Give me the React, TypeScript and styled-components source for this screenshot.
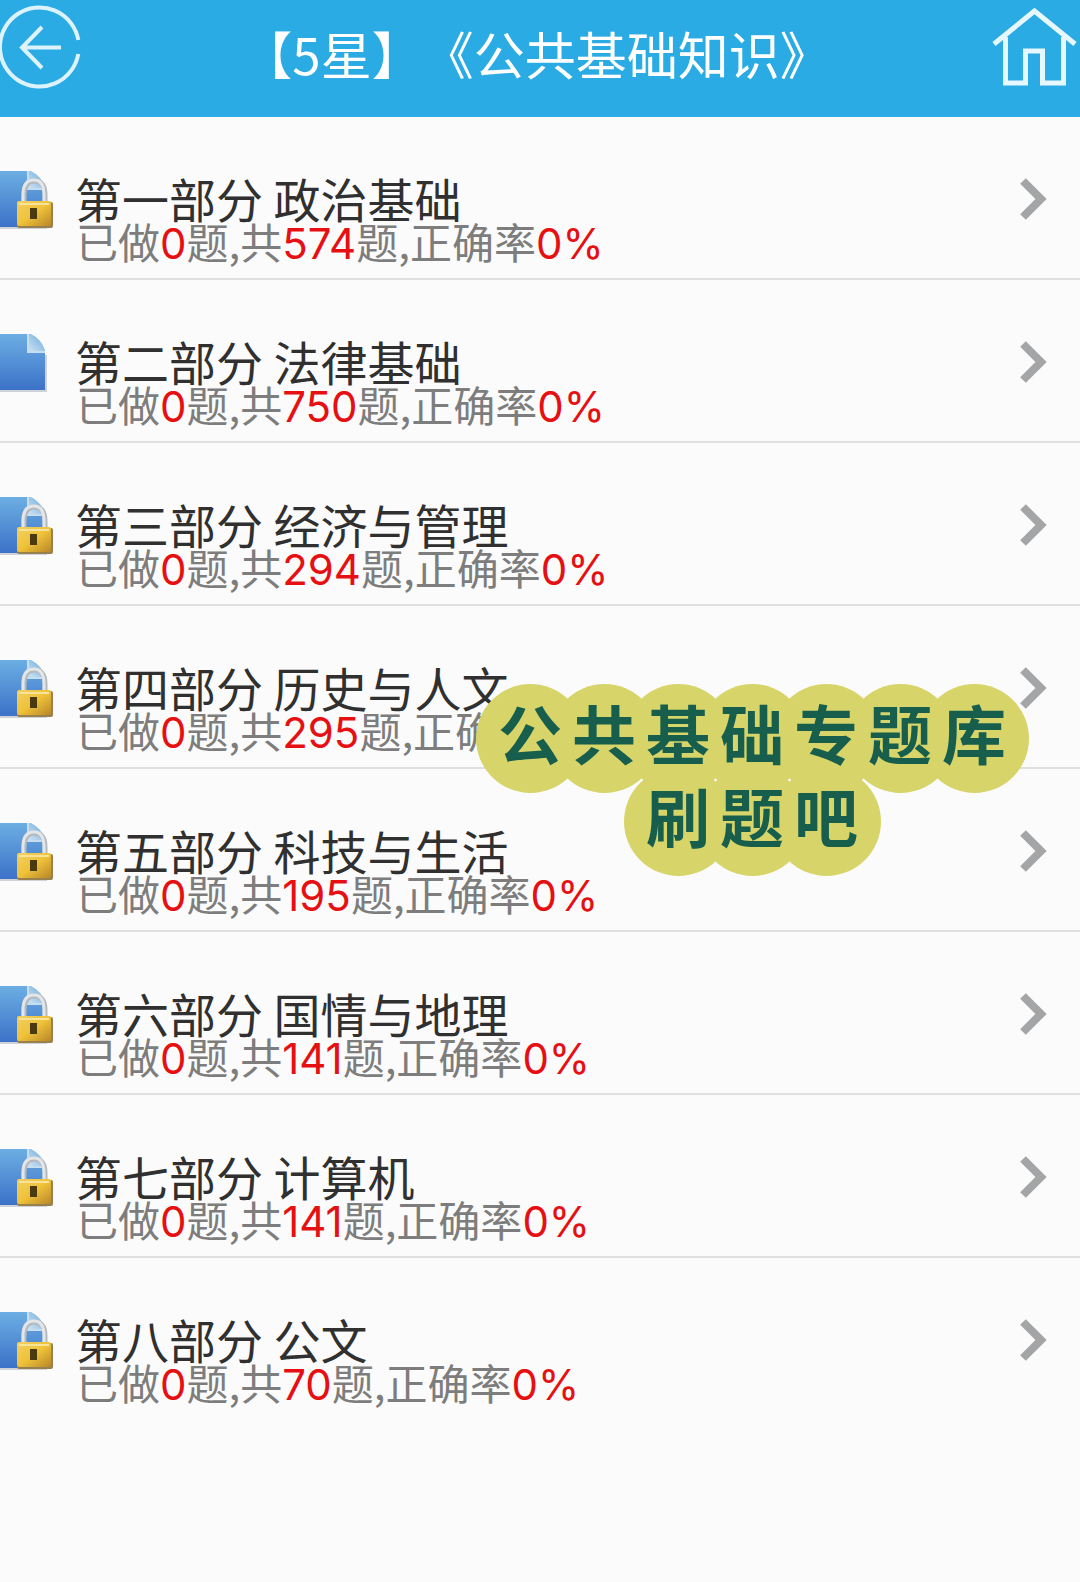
import React from "react";
import styled, { createGlobalStyle } from "styled-components";

const GlobalStyle = createGlobalStyle`
  * { box-sizing: border-box; }
  body {
    margin: 0;
    background: #fbfbfb;
    font-family: "Noto Sans CJK SC", "Noto Sans", sans-serif;
  }
`;

const Page = styled.div`
  position: relative;
  min-height: 100vh;
  overflow: hidden;
  background: #fbfbfb;
`;

const Header = styled.header`
  display: flex;
  align-items: flex-start;
  height: 117px;
  background: #2aabe4;
`;

const IconButton = styled.button<{ $width: number }>`
  flex: none;
  width: ${(p) => p.$width}px;
  padding: 1px 0 0;
  border: 0;
  background: none;
  cursor: pointer;
  svg { display: block; }
`;

const Heading = styled.h1`
  flex: 1;
  margin: 0;
  color: #fff;
  font-size: 51px;
  font-weight: 400;
  line-height: 106px;
  text-align: center;
  white-space: nowrap;
  text-spacing-trim: space-all;
`;

const List = styled.ul`
  margin: 0;
  padding: 0;
  list-style: none;
`;

const Item = styled.li`
  & + & { border-top: 2px solid #e0e0e0; }
`;

const RowLink = styled.a`
  display: flex;
  align-items: flex-start;
  height: 161px;
  padding-right: 32px;
  color: inherit;
  text-decoration: none;
  > svg { margin-top: 53px; }
`;

const Body = styled.div`
  flex: 1;
  padding: 56px 0 0 20px;
  white-space: nowrap;
`;

const Title = styled.h2`
  margin: 0;
  color: #303030;
  font-size: 47px;
  font-weight: 400;
  line-height: 50px;
`;

const Stats = styled.p`
  margin: 0;
  padding-left: 1px;
  color: #7d7d7d;
  font-size: 42px;
  line-height: 34px;
`;

const Num = styled.span`
  color: #e60f12;
  font-family: Inter, "Noto Sans", sans-serif;
  line-height: 1;
`;

const Sticker = styled.aside`
  position: absolute;
  top: 684px;
  right: 52px;
  display: flex;
  flex-direction: column;
  align-items: center;
  padding: 0 17px;
`;

const StickerLine = styled.div`
  display: flex;
  height: 83px;
`;

const Bubble = styled.span`
  display: grid;
  place-content: center;
  place-items: center;
  width: 74px;
  height: 109px;
  color: #175f4c;
  font-size: 64px;
  font-weight: 700;
  line-height: 90px;
  &::before {
    content: "";
    grid-area: 1 / 1;
    width: 109px;
    height: 109px;
    border-radius: 50%;
    background: #d7d46a;
  }
`;

const Glyph = styled.span`
  position: relative;
  z-index: 1;
  grid-area: 1 / 1;
  padding-bottom: 16px;
`;

const BackIcon = () => (
  <svg width="82" height="94" viewBox="0 0 82 94" fill="none" stroke="#dcf3fd" strokeWidth="4">
    <path d="M78.300 39A39.500 39.500 0 1 0 78.300 53" />
    <path d="M61 46.500H22M42 26L22 46.500L42 67" />
  </svg>
);

const HomeIcon = () => (
  <svg width="90" height="94" viewBox="0 0 90 94" fill="none" stroke="#e6f7fe" strokeWidth="5">
    <path d="M4 43L44.500 10L85 43" />
    <path d="M15.500 36V82H35.500V50H52.500V82H73.500V36" />
  </svg>
);

const FileIcon = ({ locked }: { locked: boolean }) => (
  <svg width="55" height="62" viewBox="0 0 55 62">
    <defs>
      <linearGradient id="paper" x1="0" y1="0" x2="0" y2="1">
        <stop offset="0" stopColor="#6caee3" />
        <stop offset="1" stopColor="#3c72c8" />
      </linearGradient>
      <linearGradient id="fold" x1="0" y1="1" x2="1" y2="0">
        <stop offset="0" stopColor="#d6e8f6" />
        <stop offset="1" stopColor="#69a9dc" />
      </linearGradient>
      <linearGradient id="brass" x1="0" y1="0" x2="1" y2="1">
        <stop offset="0" stopColor="#f2cf62" />
        <stop offset="0.500" stopColor="#efc238" />
        <stop offset="1" stopColor="#b9872a" />
      </linearGradient>
    </defs>
    <path d="M0 58H46V22" fill="none" stroke="#cfd3d8" strokeWidth="2" />
    <path d="M0 1H27L45 20V57H0Z" fill="url(#paper)" />
    <path d="M27 1H31Q41 6 45 17V20H27Z" fill="url(#fold)" />
    <path d="M28 1V19H45" fill="none" stroke="#c7def1" strokeWidth="2" />
    {locked && (
      <g>
        <path d="M24 34V25Q24 11 34 11Q45 11 45 25V34" fill="none" stroke="#b4b9be" strokeWidth="5" />
        <path d="M23 34V25Q23 10 34 10Q44 10 44 25V34" fill="none" stroke="#e3e6e9" strokeWidth="3" />
        <rect x="17" y="32" width="36" height="26" rx="2" fill="#98814f" />
        <rect x="17" y="31" width="34" height="25" rx="2" fill="url(#brass)" />
        <path d="M19 34H49" stroke="#f8e39a" strokeWidth="2" />
        <path d="M30 38H37V49H30Z" fill="#4a3a12" />
      </g>
    )}
  </svg>
);

const Chevron = () => (
  <svg width="28" height="58" viewBox="0 0 28 58" fill="none" stroke="#a3a5a6" strokeWidth="8">
    <path d="M3 11L21 29L3 47" />
  </svg>
);

const parts = [
  { title: "第一部分 政治基础", total: 574, locked: true },
  { title: "第二部分 法律基础", total: 750, locked: false },
  { title: "第三部分 经济与管理", total: 294, locked: true },
  { title: "第四部分 历史与人文", total: 295, locked: true },
  { title: "第五部分 科技与生活", total: 195, locked: true },
  { title: "第六部分 国情与地理", total: 141, locked: true },
  { title: "第七部分 计算机", total: 141, locked: true },
  { title: "第八部分 公文", total: 70, locked: true },
];

const stickerLines = ["公共基础专题库", "刷题吧"];

export default function App() {
  return (
    <Page>
      <GlobalStyle />
      <Header>
        <IconButton $width={82} type="button" aria-label="返回">
          <BackIcon />
        </IconButton>
        <Heading>【5星】《公共基础知识》</Heading>
        <IconButton $width={90} type="button" aria-label="首页">
          <HomeIcon />
        </IconButton>
      </Header>
      <List>
        {parts.map((part) => (
          <Item key={part.title}>
            <RowLink href="#">
              <FileIcon locked={part.locked} />
              <Body>
                <Title>{part.title}</Title>
                <Stats>
                  已做<Num>0</Num>题,共<Num>{part.total}</Num>题,正确率<Num>0%</Num>
                </Stats>
              </Body>
              <Chevron />
            </RowLink>
          </Item>
        ))}
      </List>
      <Sticker>
        {stickerLines.map((line) => (
          <StickerLine key={line}>
            {[...line].map((char) => (
              <Bubble key={char}>
                <Glyph>{char}</Glyph>
              </Bubble>
            ))}
          </StickerLine>
        ))}
      </Sticker>
    </Page>
  );
}
